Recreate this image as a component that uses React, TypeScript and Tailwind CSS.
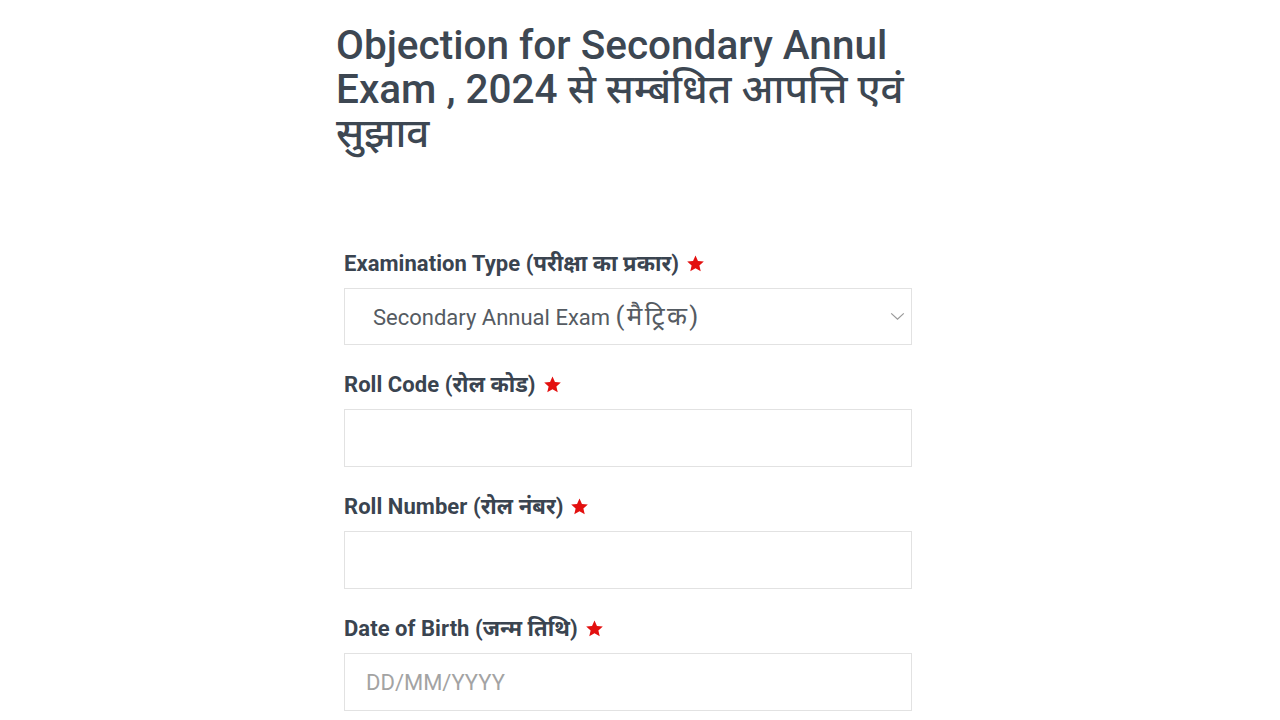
import React from "react";

const Star = () => (
  <svg viewBox="0 0 24 24" className="w-[19px] h-[19px] ml-[7px] inline-block" fill="#e3100f">
    <path d="M12 1.8l3.1 6.9 7.4.7-5.6 5 1.7 7.4L12 17.9l-6.6 3.9 1.7-7.4-5.6-5 7.4-.7z" />
  </svg>
);

const Label = ({ children }: { children: React.ReactNode }) => (
  <div className="flex items-center h-[30px] text-[22px] font-bold text-[#3a4450] tracking-[0.05px]">
    <span>{children}</span>
    <Star />
  </div>
);

export default function App() {
  return (
    <div
      className="w-[1280px] h-[720px] bg-white overflow-hidden"
      style={{ fontFamily: 'Roboto, "Noto Sans", "Noto Sans Devanagari", sans-serif' }}
    >
      <div className="ml-[336px] w-[600px] pt-[23px]">
        <h1 className="text-[40.5px] leading-[44px] font-medium text-[#3d4752] w-[600px]">
          Objection for Secondary Annul Exam , 2024 से सम्बंधित आपत्ति एवं सुझाव
        </h1>
        <div className="mt-[93px] ml-[8px] w-[568px] flex flex-col">
          <Label>Examination Type (परीक्षा का प्रकार)</Label>
          <div className="mt-[10px] h-[57px] border border-[#e2e2e2] flex items-center justify-between pl-[28px] pr-[6px] text-[22px] text-[#555b62]">
            <span>
              Secondary Annual Exam <span className="text-[26px] tracking-[2.4px]">(मैट्रिक)</span>
            </span>
            <svg viewBox="0 0 16 10" className="w-[15px] h-[9px]" fill="none" stroke="#9a9a9a" strokeWidth="1.4">
              <path d="M1 1.5l7 6.5 7-6.5" />
            </svg>
          </div>
          <div className="mt-[24px]">
            <Label>Roll Code (रोल कोड)</Label>
          </div>
          <div className="mt-[10px] h-[58px] border border-[#e2e2e2]" />
          <div className="mt-[24px]">
            <Label>Roll Number (रोल नंबर)</Label>
          </div>
          <div className="mt-[10px] h-[58px] border border-[#e2e2e2]" />
          <div className="mt-[24px]">
            <Label>Date of Birth (जन्म तिथि)</Label>
          </div>
          <div className="mt-[10px] h-[58px] border border-[#e2e2e2] flex items-center pl-[21px] text-[22px] text-[#a3a3a3]">
            DD/MM/YYYY
          </div>
        </div>
      </div>
    </div>
  );
}
